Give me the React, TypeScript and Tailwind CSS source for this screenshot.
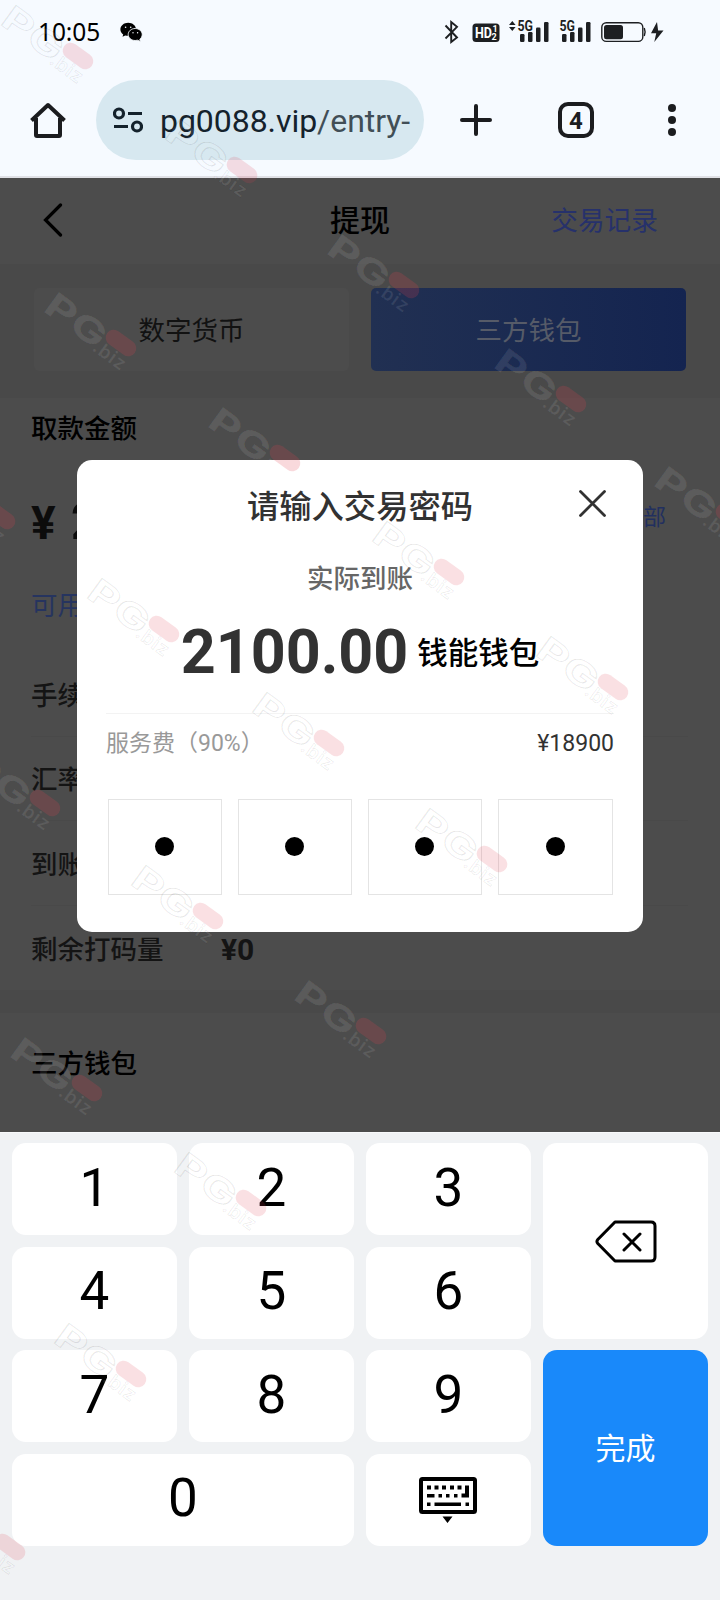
import React from 'react';

const CJK = "font-['Roboto','Noto_Sans_CJK_SC',sans-serif]";

const MARKS: [number, number][] = [
  [78, 56], [242, 170], [404, 285], [571, 399],
  [121, 343], [285, 458], [449, 572], [613, 687],
  [0, 516], [731, 517], [164, 629], [329, 743], [492, 859],
  [45, 803], [208, 916], [371, 1031], [87, 1088], [251, 1203],
  [131, 1374], [10, 1547],
];

function isDark(x: number, y: number) {
  return y > 200 && y < 1110 && !(x > 100 && x < 680 && y > 500 && y < 930);
}

function Watermarks() {
  return (
    <svg className="pointer-events-none absolute inset-0" width="720" height="1600" viewBox="0 0 720 1600">
      {MARKS.map(([x, y]) => {
        const dark = isDark(x, y);
        return (
          <g key={`${x}-${y}`} transform={`translate(${x} ${y}) rotate(36)`}>
            <g
              fill="#ffffff"
              fillOpacity={dark ? 0.09 : 0.1}
              stroke={dark ? '#ffffff' : '#000000'}
              strokeOpacity={dark ? 0.03 : 0.09}
              strokeWidth="1"
              fontFamily="Inter, sans-serif"
              fontWeight="700"
            >
              <text x="-83" y="20" fontSize="34" textLength="67" lengthAdjust="spacingAndGlyphs">PG</text>
              <text x="-20" y="23" fontSize="19" textLength="36" fontWeight="600" strokeWidth="0.7">.biz</text>
            </g>
            <rect x="-17" y="-8" width="34" height="16" rx="8" fill="#e04050" fillOpacity={dark ? 0.2 : 0.16} />
          </g>
        );
      })}
    </svg>
  );
}

function StatusIcons() {
  return (
    <svg width="228" height="28" viewBox="436 18 228 28" fill="#1d1f22">
      <path d="M445.5 25.5 457 37.5 451.2 42V22L457 26.8 445.5 38.5" fill="none" stroke="#1d1f22" strokeWidth="1.9" />
      <rect x="472.5" y="23.5" width="27" height="18.5" rx="3.5" />
      <text x="475" y="38" fontFamily="Roboto" fontWeight="700" fontSize="14.5" fill="#fff" textLength="17" lengthAdjust="spacingAndGlyphs">HD</text>
      <text x="492.5" y="32" fontFamily="Roboto" fontWeight="700" fontSize="9" fill="#fff">1</text>
      <text x="491.5" y="40" fontFamily="Roboto" fontWeight="700" fontSize="9" fill="#fff">2</text>
      <path d="m509 25 3.3-4 3.3 4zM509 27l3.3 4 3.3-4z" />
      <text x="517.5" y="31" fontFamily="Roboto" fontWeight="700" fontSize="14" textLength="15.5" lengthAdjust="spacingAndGlyphs">5G</text>
      <rect x="520" y="34" width="4.5" height="8" rx="1.2" />
      <rect x="528" y="32" width="4.5" height="10" rx="1.2" />
      <rect x="536" y="27.5" width="4.5" height="14.5" rx="1.2" />
      <rect x="544" y="22" width="4.5" height="20" rx="1.2" />
      <text x="559.5" y="31" fontFamily="Roboto" fontWeight="700" fontSize="14" textLength="15.5" lengthAdjust="spacingAndGlyphs">5G</text>
      <rect x="562" y="34" width="4.5" height="8" rx="1.2" />
      <rect x="570" y="32" width="4.5" height="10" rx="1.2" />
      <rect x="578" y="27.5" width="4.5" height="14.5" rx="1.2" />
      <rect x="586" y="22" width="4.5" height="20" rx="1.2" />
      <rect x="601.8" y="22.8" width="41" height="18.6" rx="4.5" fill="none" stroke="#1d1f22" strokeWidth="1.4" />
      <rect x="604" y="25" width="19" height="14.2" rx="2.5" />
      <path d="M644.3 28q1.6 4 0 8" fill="none" stroke="#1d1f22" strokeWidth="1.4" />
      <path d="M657 22 651 33.2h5.2L654.3 42 663.5 30.6h-5.4z" />
    </svg>
  );
}

function BrowserChrome() {
  return (
    <header className="flex h-[178px] flex-col border-b-2 border-[#e0e1e6] bg-[#f6faff]">
      <div className="flex h-16 items-center pr-14 pl-[38px]">
        <span className="w-[62px] font-['Noto_Sans'] text-[24.500px] leading-none tracking-[-0.1px] text-black">10:05</span>
        <svg className="ml-5" width="23" height="20" viewBox="0 0 23 20">
          <path d="M8.2.8C3.900.8.4 3.700.4 7.400c0 2 1.100 3.800 2.800 5L2.500 14.800l2.800-1.400c.9.300 1.900.4 2.900.4 4.300 0 7.800-2.900 7.800-6.500S12.500.8 8.200.8z" />
          <path d="M15.200 6.500c-3.900 0-7 2.700-7 6s3.100 6 7 6c.8 0 1.600-.1 2.300-.3l3 1.400-.7-2.300c1.500-1.100 2.400-2.900 2.400-4.800 0-3.300-3.100-6-7-6z" stroke="#f6faff" strokeWidth="0.9" />
          <g fill="#f6faff"><circle cx="5.600" cy="5.200" r=".8" /><circle cx="10.700" cy="5.200" r=".8" /><circle cx="13" cy="10.800" r=".7" /><circle cx="17.600" cy="10.800" r=".7" /></g>
        </svg>
        <div className="ml-auto"><StatusIcons /></div>
      </div>
      <div className="mt-4 flex h-20 items-center">
        <svg className="ml-[30px] shrink-0" width="36" height="36" viewBox="0 0 36 36" fill="none" stroke="#1b1c1f" strokeWidth="4">
          <path d="M1.500 18.500 18 3l16.500 15.500" strokeLinejoin="round" />
          <path d="M6 16v17q0 1 1 1h22q1 0 1-1V16" />
        </svg>
        <div className="ml-[30px] flex h-20 w-[328px] shrink-0 items-center rounded-full bg-[#d7e8f0] pl-[17px]">
          <svg className="shrink-0" width="30" height="26" viewBox="0 0 30 26" fill="none" stroke="#14222c" strokeWidth="3.200">
            <circle cx="6" cy="6.500" r="4.500" /><path d="M15 6.500h14M1 19.500h14" /><circle cx="24" cy="19.500" r="4.500" />
          </svg>
          <span className="mt-0.5 ml-[17px] font-['Roboto'] text-[32px] leading-[44px] tracking-[-0.05px] whitespace-nowrap text-[#14222c]">
            pg0088.vip<span className="text-[#414e56]">/entry-</span>
          </span>
        </div>
        <svg className="ml-9 shrink-0" width="32" height="32" viewBox="0 0 32 32" stroke="#1b1c1f" strokeWidth="4" strokeLinecap="round"><path d="M16 2v28M2 16h28" /></svg>
        <div className="ml-[66px] flex size-9 shrink-0 items-center justify-center rounded-[10px] border-4 border-[#1b1c1f] pt-0.5 font-['Roboto'] text-2xl leading-none font-bold text-[#1b1c1f]">4</div>
        <svg className="ml-[74px] shrink-0" width="8" height="32" viewBox="0 0 8 32" fill="#1b1c1f"><circle cx="4" cy="4" r="4" /><circle cx="4" cy="16" r="4" /><circle cx="4" cy="28" r="4" /></svg>
      </div>
    </header>
  );
}

function Row({ label, value, last }: { label: string; value?: string; last?: boolean }) {
  return (
    <div className={`mr-8 ml-[31px] flex h-[84.500px] items-center pt-1 text-[26.500px] font-medium text-[#141414] ${last ? '' : 'border-b border-[#494949]'}`}>
      <span className="w-[190px]">{label}</span>
      {value && <span className="text-[30px] font-bold">{value}</span>}
    </div>
  );
}

function Page() {
  return (
    <section className="flex h-[954px] flex-col overflow-hidden bg-[#4c4c4c]">
      <div className="grid h-[86px] grid-cols-3 items-center">
        <svg className="mb-[3px] ml-[43px]" width="20" height="34" viewBox="0 0 20 34" fill="none" stroke="#000" strokeWidth="3.200" strokeLinecap="round"><path d="M17.500 2 2.500 17 17.500 32" /></svg>
        <h1 className="mb-0.5 text-center text-[30px] font-medium text-black">提现</h1>
        <a className="justify-self-end pr-[62px] text-[26.700px] text-[#26316b]">交易记录</a>
      </div>
      <div className="flex h-[134px] gap-[22px] bg-[#494949] px-[34px] pt-6 text-[26.500px]">
        <div className="flex h-[83px] flex-1 items-center justify-center rounded-[5px] bg-[#4c4c4c] pt-0.5 text-[#121212]">数字货币</div>
        <div className="flex h-[83px] flex-1 items-center justify-center rounded-[5px] bg-linear-to-r from-[#213052] to-[#142450] pt-0.5 text-[#565b68]">三方钱包</div>
      </div>
      <div className="flex h-[592px] flex-col">
        <h2 className="mt-[11px] h-[38px] px-[31px] text-[26.500px] leading-10 font-medium text-black">取款金额</h2>
        <div className="flex h-[148px] items-center justify-between pr-[54px] pl-[31px]">
          <span className="mt-0.5 font-['Roboto'] text-[46px] leading-none font-bold text-[#0c0c0c]">¥<span className="ml-[15px] text-[52px]">2</span></span>
          <span className="mb-[5px] text-[23px] text-[#22305f]">全部</span>
        </div>
        <div className="h-[57px] px-[31px] text-[26.500px] leading-[22px] text-[#26345f]">可用</div>
        <Row label="手续" />
        <Row label="汇率" />
        <Row label="到账" />
        <Row label="剩余打码量" value="¥0" last />
      </div>
      <div className="h-[23px] shrink-0 bg-[#494949]" />
      <h2 className="mt-[31px] px-[31px] text-[26.500px] leading-10 font-medium text-black">三方钱包</h2>
    </section>
  );
}

function PasswordDialog() {
  return (
    <div className="absolute top-[460px] left-[77px] flex h-[472px] w-[566px] flex-col rounded-[15px] bg-white px-[29px]">
      <div className="relative flex h-[92px] items-center justify-center">
        <h3 className="pt-[3px] text-[32.300px] font-medium text-[#323232]">请输入交易密码</h3>
        <svg className="absolute top-[30px] right-[8px]" width="27" height="27" viewBox="0 0 27 27" stroke="#323232" strokeWidth="2.800" strokeLinecap="round"><path d="M1.500 1.500 25.500 25.500M25.500 1.500 1.500 25.500" /></svg>
      </div>
      <p className="mt-[7px] h-[39px] text-center text-[26.500px] leading-10 font-medium text-[#666]">实际到账</p>
      <div className="flex h-[116px] items-center justify-center border-b border-[#f3f3f3]">
        <span className="mr-px mb-[7px] font-['Roboto'] text-[61px] leading-none font-bold text-[#323232]">2100.00</span>
        <span className="mb-[3px] ml-2 text-[30.500px] leading-none font-medium text-black">钱能钱包</span>
      </div>
      <div className="flex h-[58px] items-center justify-between pt-0.5 text-[23px]">
        <span className="text-[#999]">服务费（90%）</span>
        <span className="text-[#323232]">¥18900</span>
      </div>
      <div className="mt-[27px] grid h-24 grid-cols-[114px_114px_114px_115px] gap-4 pl-[2px]">
        {[0, 1, 2, 3].map((i) => (
          <div key={i} className="flex items-center justify-center border border-[#e4e4e4]">
            <span className="mr-px mb-px size-[19px] rounded-full bg-black" />
          </div>
        ))}
      </div>
    </div>
  );
}

function Key({ children, className = '' }: { children: React.ReactNode; className?: string }) {
  return <div className={`flex items-center justify-center rounded-[14px] ${className}`}>{children}</div>;
}

function Keypad() {
  return (
    <section className="h-[468px] border-t border-[#f8f9fa] bg-[#f0f2f4] px-3 pt-[10px] font-['Roboto'] text-[53px] leading-none text-black">
      <div className="grid grid-cols-4 grid-rows-[92px_92px_92px_92px] gap-x-3 gap-y-[11.670px]">
        {['1', '2', '3'].map((n) => <Key key={n} className="bg-white pb-0.5">{n}</Key>)}
        <Key className="row-span-2 bg-white">
          <svg className="mt-[1px] ml-[1px]" width="62" height="43" viewBox="0 0 62 43" fill="none" stroke="#000" strokeWidth="3" strokeLinecap="round" strokeLinejoin="round">
            <path d="M20 2h36q4 0 4 4v31q0 4-4 4H20L2.800 23.500q-1.700-2 0-4zM29 14l16 16M45 14 29 30" />
          </svg>
        </Key>
        {['4', '5', '6'].map((n) => <Key key={n} className="bg-white pb-0.5">{n}</Key>)}
        {['7', '8', '9'].map((n) => <Key key={n} className="bg-white pb-0.5">{n}</Key>)}
        <Key className={`row-span-2 bg-[#1989fa] pt-0.5 text-[30px] text-white ${CJK}`}>完成</Key>
        <Key className="col-span-2 bg-white pb-0.5">0</Key>
        <Key className="bg-white">
          <svg className="mr-0.5" width="58" height="46" viewBox="0 0 58 46">
            <rect x="2" y="2" width="54" height="33" rx="1.500" fill="none" stroke="#000" strokeWidth="4" />
            <path d="M8 8.500h4v4H8zM15.500 8.500h4v4h-4zM23 8.500h4v4h-4zM31 8.500h4v4h-4zM38.500 8.500h4v4h-4zM46 8.500h4v12h-7.500v-4H46zM8 17h7.500v3.500H8zM19.500 17h3.500v3.500h-3.500zM27 17h3.500v3.500H27zM35 17h3.500v3.500H35zM8 25.500h3.500V29H8zM15.500 25.500h26.500V29H15.500zM46.500 25.500H50V29h-3.500zM23.500 39.500h10L28.500 46z" />
          </svg>
        </Key>
      </div>
    </section>
  );
}

export default function App() {
  return (
    <main className={`relative h-[1600px] w-[720px] overflow-hidden ${CJK}`}>
      <BrowserChrome />
      <Page />
      <Keypad />
      <PasswordDialog />
      <Watermarks />
    </main>
  );
}
